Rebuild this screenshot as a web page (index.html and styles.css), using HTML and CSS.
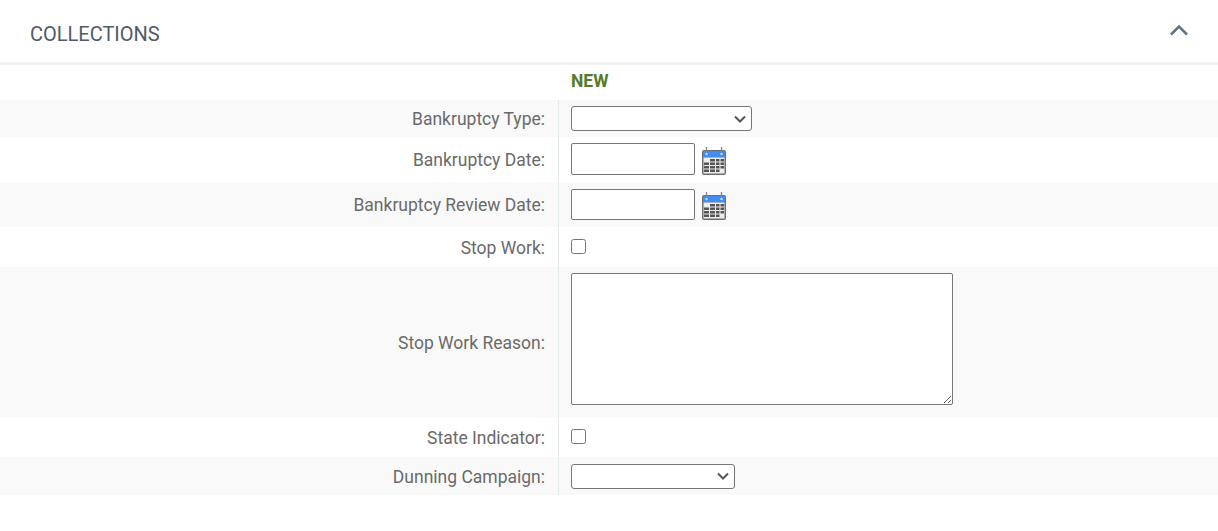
FILE: index.html
```html
<!DOCTYPE html>
<html lang="en">
<head>
<meta charset="utf-8">
<title>Collections</title>
<link rel="stylesheet" href="styles.css">
</head>
<body>
<svg class="defs" width="0" height="0" aria-hidden="true">
  <symbol id="cal" viewBox="0 0 26 30">
    <rect x="1" y="4" width="24" height="25" rx="2" fill="#6b6e72"/>
    <rect x="2" y="5" width="22" height="6.500" fill="#3d8ef0"/>
    <rect x="2.500" y="11.500" width="21" height="16" fill="#ededed"/>
    <path d="M5.500 1v7M20.500 1v7" stroke="#858585" stroke-width="1.300" fill="none"/>
    <circle cx="5.500" cy="8" r="1.300" fill="#b9d3f3"/>
    <circle cx="20.500" cy="8" r="1.300" fill="#b9d3f3"/>
    <path d="M9 13h5v2.500H9zM15 13h3.500v2.500H15zM19.500 13h3.500v2.500h-3.500zM3 16.500h5V19H3zM9 16.500h5V19H9zM15 16.500h3.500V19H15zM19.500 16.500h3.500V19h-3.500zM3 20h5v2.500H3zM9 20h5v2.500H9zM15 20h3.500v2.500H15zM19.500 20h3.500v2.500h-3.500zM3 23.500h5V26H3zM9 23.500h5V26H9zM15 23.500h3.500V26H15z" fill="#555"/>
  </symbol>
</svg>
<section class="panel">
  <header class="panel-head">
    <h2 class="panel-title">COLLECTIONS</h2>
    <svg class="chevron" width="20" height="14" viewBox="0 0 20 14"><path d="M2 12.500l8-8 8 8" fill="none" stroke="#5d7480" stroke-width="2.500"/></svg>
  </header>
  <div class="status"><span class="status-spacer"></span><strong class="status-text">NEW</strong></div>
  <div class="form">
    <div class="row r-select alt"><label class="lbl">Bankruptcy Type:</label><div class="val"><select class="sel sel-wide"><option></option></select></div></div>
    <div class="row r-date"><label class="lbl">Bankruptcy Date:</label><div class="val"><input class="date" type="text"><svg class="cal" width="26" height="30"><use href="#cal"/></svg></div></div>
    <div class="row r-date alt"><label class="lbl">Bankruptcy Review Date:</label><div class="val"><input class="date" type="text"><svg class="cal" width="26" height="30"><use href="#cal"/></svg></div></div>
    <div class="row r-check"><label class="lbl lbl-low">Stop Work:</label><div class="val"><input class="chk" type="checkbox"></div></div>
    <div class="row r-area alt"><label class="lbl">Stop Work Reason:</label><div class="val val-top"><textarea class="area"></textarea></div></div>
    <div class="row r-check"><label class="lbl">State Indicator:</label><div class="val"><input class="chk" type="checkbox"></div></div>
    <div class="row r-select2 alt"><label class="lbl lbl-low">Dunning Campaign:</label><div class="val"><select class="sel sel-narrow"><option></option></select></div></div>
  </div>
</section>
</body>
</html>
```

FILE: styles.css
```css
* { box-sizing: border-box; }
html, body { margin: 0; padding: 0; background: #fff; }
body { font-family: Roboto, "Liberation Sans", sans-serif; height: 531px; overflow: hidden; }
.defs { position: absolute; }
.panel-head {
  height: 65px;
  padding: 6px 29px 0 30px;
  border-bottom: 3px solid #f2f2f2;
  display: flex;
  align-items: center;
  justify-content: space-between;
}
.panel-title { margin: 0; font-size: 20px; font-weight: 400; color: #4f5b66; }
.chevron { margin-bottom: 10px; }
.status { height: 35px; display: flex; align-items: center; }
.status-spacer { width: 571px; }
.status-text { font-size: 17.500px; font-weight: 700; color: #567a28; margin-bottom: 3px; }
.row { display: flex; }
.alt { background: #f9f9f9; }
.r-select { height: 37px; }
.r-date { height: 45px; }
.r-check { height: 40px; }
.r-check + .r-area + .r-check { height: 39px; }
.r-area { height: 151px; }
.r-select2 { height: 38px; }
.lbl {
  width: 559px;
  padding-right: 13px;
  border-right: 1px solid #e3ebea;
  display: flex;
  align-items: center;
  justify-content: flex-end;
  font-size: 17.500px;
  color: #6a6a6a;
}
.lbl-low { padding-top: 2px; }
.val { flex: 1; padding-left: 12px; display: flex; align-items: center; }
.val-top { align-items: flex-start; padding-top: 6px; }
.sel, .date, .area {
  background-color: #fff;
  border: 1px solid #767676;
  margin: 0;
  font-family: Roboto, sans-serif;
  font-size: 14px;
}
.sel {
  height: 25px;
  border-radius: 3px;
  appearance: none;
  background-image: url("data:image/svg+xml,%3Csvg xmlns='http://www.w3.org/2000/svg' width='12' height='8'%3E%3Cpath d='M1 1.500l5 5 5-5' fill='none' stroke='%23555' stroke-width='2'/%3E%3C/svg%3E");
  background-repeat: no-repeat;
  background-position: right 5px center;
}
.sel-wide { width: 181px; }
.sel-narrow { width: 164px; }
.date { width: 124px; height: 32px; border-radius: 2px; padding: 1px 2px; margin-bottom: 2px; }
.alt .date { height: 31px; margin-bottom: 0; }
.cal { margin-left: 6px; margin-top: 2px; }
.chk { width: 15px; height: 15px; margin: 0 0 2px; }
.area { width: 382px; height: 132px; border-radius: 2px; display: block; }
```
